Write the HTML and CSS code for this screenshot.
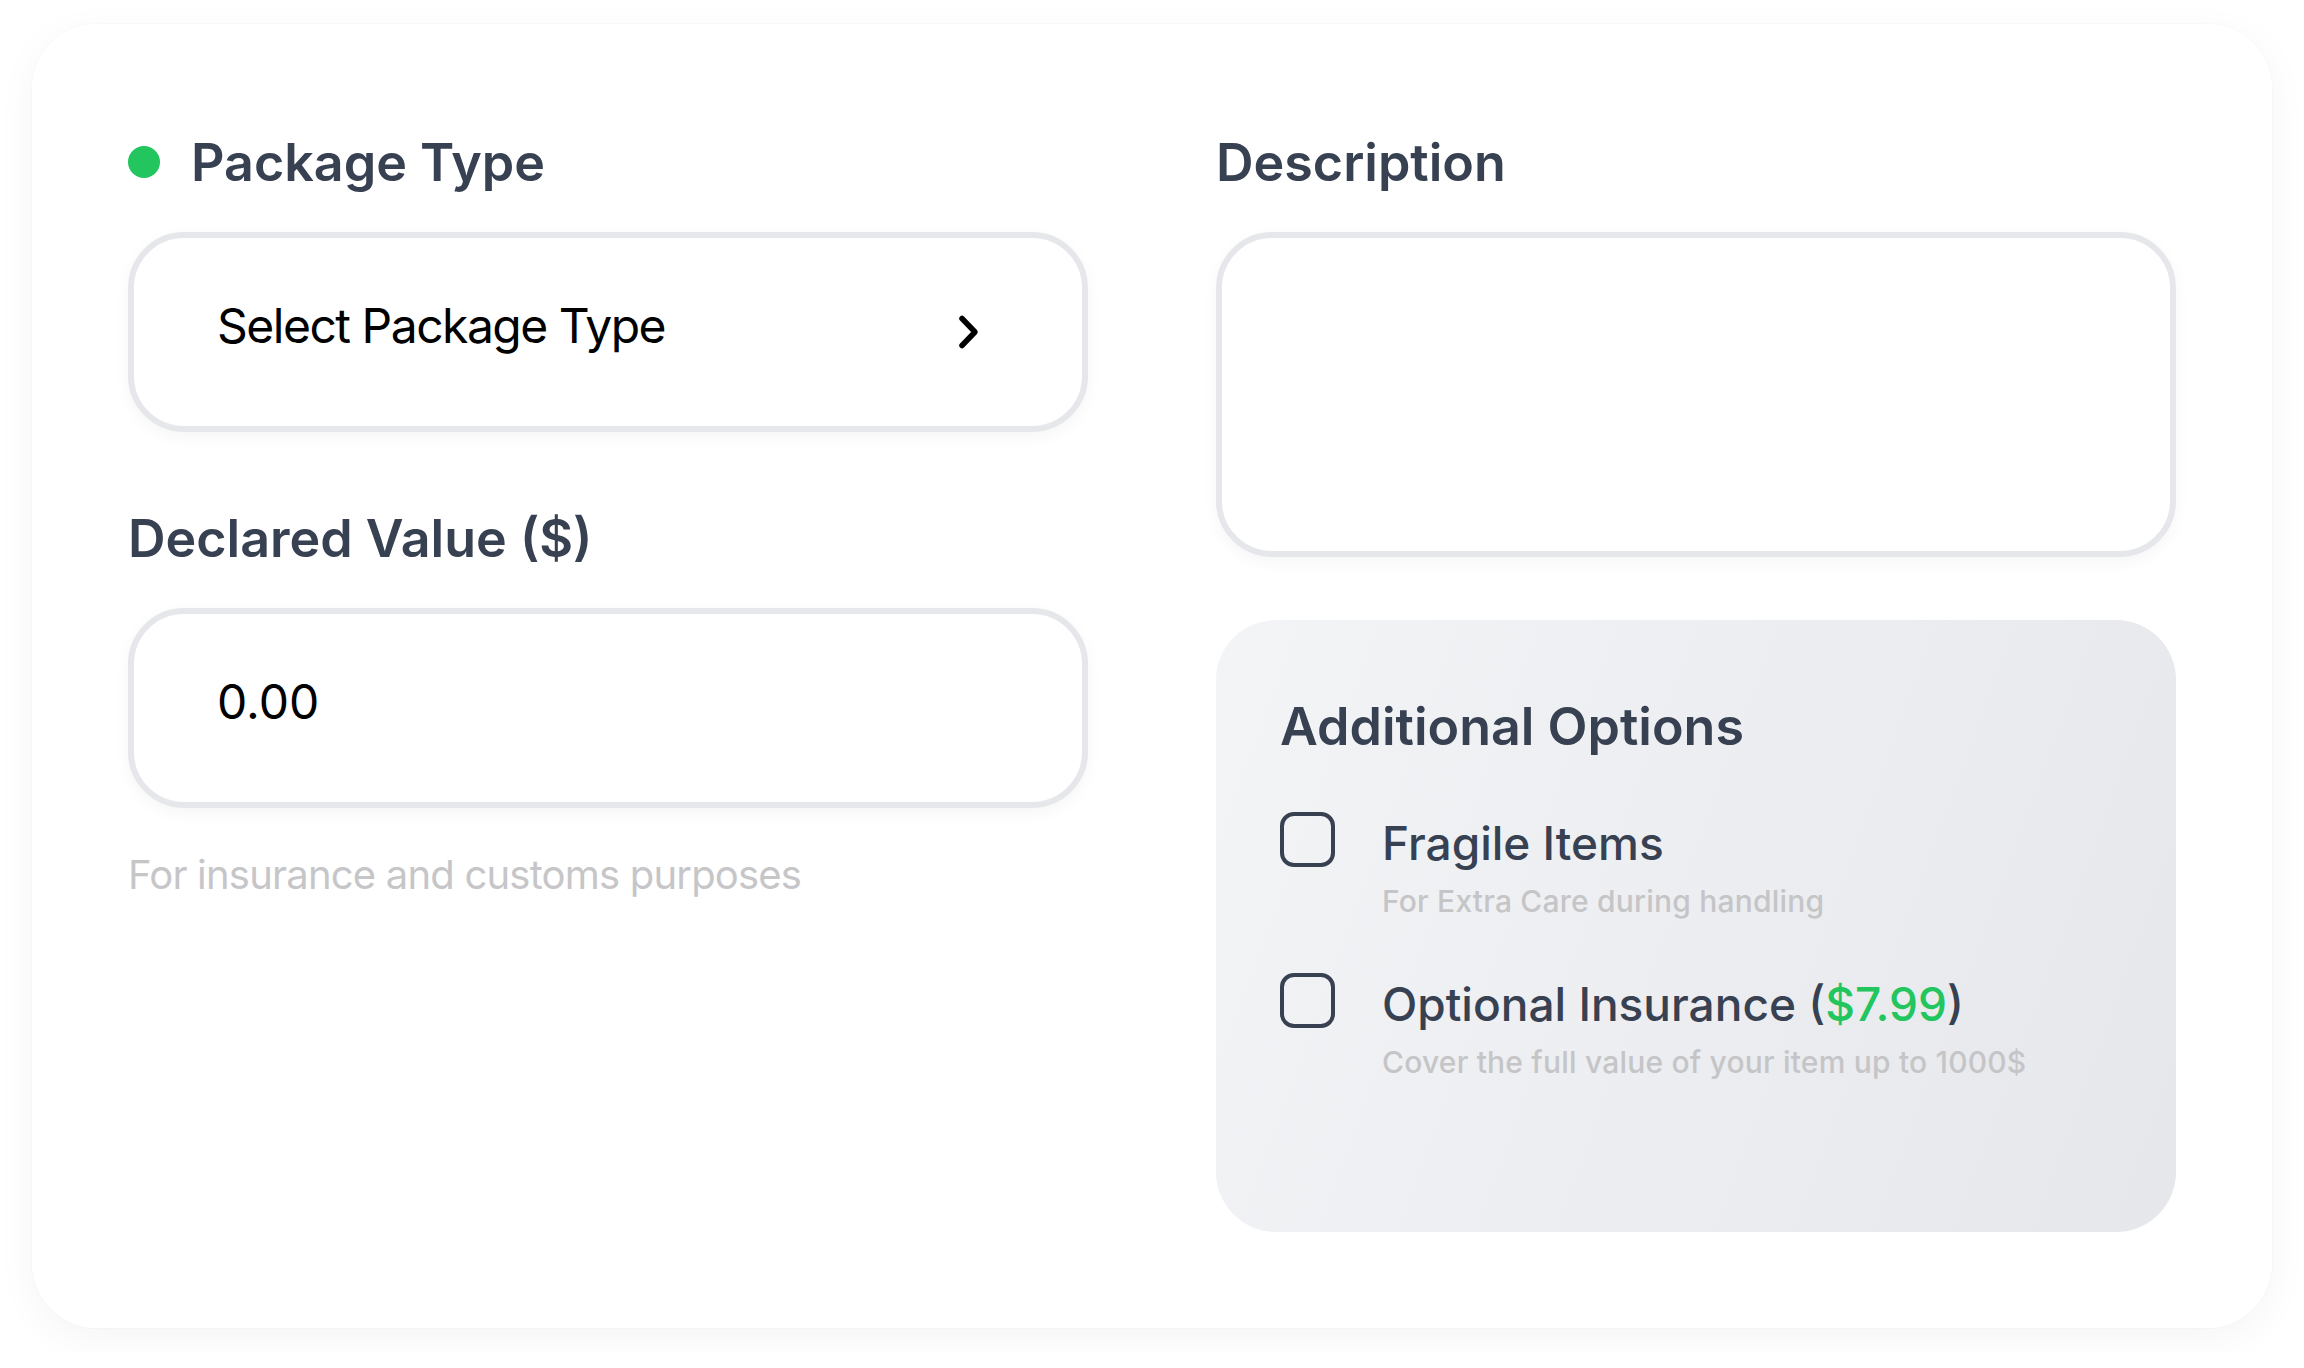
FILE: index.html
```html
<!DOCTYPE html>
<html lang="en">
<head>
<meta charset="utf-8">
<title>Package Details</title>
<link rel="stylesheet" href="styles.css">
</head>
<body>
<div class="card">
  <div class="col">
    <div class="label"><span class="dot"></span>Package Type</div>
    <div class="field select">
      <span class="value">Select Package Type</span>
      <svg class="chev" width="24" height="36" viewBox="0 0 24 36"><path d="M7 4.5 L20 18 L7 31.5" fill="none" stroke="#000" stroke-width="5.5" stroke-linecap="round" stroke-linejoin="round"/></svg>
    </div>
    <div class="label label-next">Declared Value ($)</div>
    <div class="field">
      <span class="value">0.00</span>
    </div>
    <p class="helper">For insurance and customs purposes</p>
  </div>
  <div class="col">
    <div class="label">Description</div>
    <div class="field textarea"></div>
    <div class="panel">
      <h2 class="panel-title">Additional Options</h2>
      <div class="option">
        <span class="check"></span>
        <div class="opt-text">
          <div class="opt-title">Fragile Items</div>
          <div class="opt-sub">For Extra Care during handling</div>
        </div>
      </div>
      <div class="option option-next">
        <span class="check"></span>
        <div class="opt-text">
          <div class="opt-title">Optional Insurance (<span class="price">$7.99</span>)</div>
          <div class="opt-sub">Cover the full value of your item up to 1000$</div>
        </div>
      </div>
    </div>
  </div>
</div>
</body>
</html>
```
FILE: styles.css
```css
html, body {
  margin: 0;
  background: #ffffff;
}
body {
  padding: 24px 32px;
  font-family: Inter, "Noto Sans", "Liberation Sans", sans-serif;
}
.card {
  background: #ffffff;
  border-radius: 64px;
  box-shadow: 0 10px 40px rgba(0, 0, 0, 0.045), 0 0 0 1px rgba(0, 0, 0, 0.015);
  padding: 96px;
  display: grid;
  grid-template-columns: 1fr 1fr;
  column-gap: 128px;
  align-items: start;
}
.col {
  display: flex;
  flex-direction: column;
}
.label {
  display: flex;
  align-items: center;
  font-size: 52px;
  font-weight: 600;
  line-height: 80px;
  color: #374151;
  padding-top: 3px;
  margin-bottom: 29px;
}
.label-next {
  margin-top: 64px;
}
.dot {
  width: 32px;
  height: 32px;
  border-radius: 50%;
  background: #22c55e;
  margin-right: 31px;
  margin-bottom: 3px;
  flex: none;
}
.field {
  box-sizing: border-box;
  height: 200px;
  border: 6px solid #e5e7eb;
  border-radius: 56px;
  background: #ffffff;
  box-shadow: 0 5px 16px rgba(0, 0, 0, 0.04);
  display: flex;
  align-items: center;
  justify-content: space-between;
  padding: 0 103px 0 83px;
  font-size: 48px;
  color: #000000;
}
.value {
  margin-bottom: 13px;
}
.select .value {
  letter-spacing: -1.5px;
}
.chev {
  flex: none;
}
.textarea {
  height: 325px;
}
.helper {
  margin: 39px 0 0;
  font-size: 40px;
  line-height: 56px;
  letter-spacing: -0.8px;
  color: #c6c6c8;
}
.panel {
  box-sizing: border-box;
  margin-top: 63px;
  height: 612px;
  border-radius: 60px;
  background: linear-gradient(110deg, #f3f4f6 0%, #e5e7eb 100%);
  padding: 67px 64px 64px;
}
.panel-title {
  margin: 0 0 45px;
  font-size: 52px;
  font-weight: 600;
  line-height: 80px;
  color: #374151;
}
.option {
  display: flex;
  align-items: flex-start;
  gap: 47px;
}
.option-next {
  margin-top: 52px;
}
.check {
  box-sizing: border-box;
  width: 55px;
  height: 55px;
  border: 4px solid #374151;
  border-radius: 14px;
  flex: none;
}
.opt-text {
  display: flex;
  flex-direction: column;
  margin-top: 1px;
}
.opt-title {
  font-size: 46px;
  font-weight: 500;
  line-height: 60px;
  color: #374151;
}
.price {
  color: #22c55e;
}
.opt-sub {
  margin-top: 8px;
  font-size: 30px;
  font-weight: 500;
  line-height: 40px;
  letter-spacing: 0.2px;
  color: #c5c5c7;
}
```
